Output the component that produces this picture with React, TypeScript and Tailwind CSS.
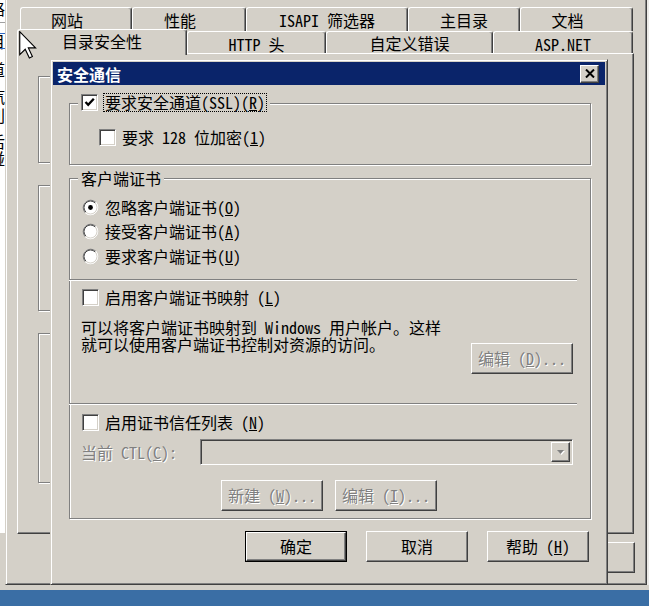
import React from "react";

const raised =
  "bg-[#d4d0c8] border border-t-white border-l-white border-r-[#404040] border-b-[#404040] shadow-[inset_-1px_-1px_0_#808080,inset_1px_1px_0_#d4d0c8]";
const sunken =
  "border border-t-[#808080] border-l-[#808080] border-r-white border-b-white shadow-[inset_1px_1px_0_#404040,inset_-1px_-1px_0_#d4d0c8]";
const etched = "border border-[#808080] shadow-[inset_1px_1px_0_#fff,1px_1px_0_#fff]";
const dis = "text-[#808080] [text-shadow:1px_1px_0_#fff]";

function Check({ checked }: { checked?: boolean }) {
  return (
    <div className={`w-[17px] h-[17px] bg-white shrink-0 flex items-center justify-center ${sunken}`}>
      {checked && (
        <svg width="11" height="11" viewBox="0 0 11 11">
          <path d="M1.5 5 L4.2 7.8 L9.8 1.8" stroke="#000" strokeWidth="2.3" fill="none" />
        </svg>
      )}
    </div>
  );
}

function Radio({ checked }: { checked?: boolean }) {
  return (
    <svg width="17" height="17" viewBox="0 0 17 17" className="shrink-0">
      <circle cx="8.5" cy="8.5" r="7.5" fill="#fff" />
      <path d="M3.2 13.8 A7.5 7.5 0 0 1 13.8 3.2" stroke="#808080" fill="none" />
      <path d="M13.8 3.2 A7.5 7.5 0 0 1 3.2 13.8" stroke="#ffffff" fill="none" />
      <path d="M3.9 13.1 A6.5 6.5 0 0 1 13.1 3.9" stroke="#404040" fill="none" />
      <path d="M13.1 3.9 A6.5 6.5 0 0 1 3.9 13.1" stroke="#d4d0c8" fill="none" />
      {checked && <circle cx="8.5" cy="8.5" r="2.4" fill="#000" />}
    </svg>
  );
}

function Btn({
  children,
  def,
  disabled,
  w = "w-[102px]",
}: {
  children: React.ReactNode;
  def?: boolean;
  disabled?: boolean;
  w?: string;
}) {
  const inner = (
    <div
      className={`h-full w-full flex items-center justify-center whitespace-nowrap ${raised} ${disabled ? dis : "text-black"}`}
    >
      {children}
    </div>
  );
  if (def) {
    return <div className={`${w} h-[31px] border border-black shrink-0`}>{inner}</div>;
  }
  return <div className={`${w} h-[31px] shrink-0`}>{inner}</div>;
}

const tabBase =
  "flex items-center justify-center bg-[#d4d0c8] border-t border-l border-r border-t-white border-l-white border-r-[#404040] shadow-[inset_-1px_0_0_#808080] rounded-t-[3px] text-[16px] leading-[16px] whitespace-nowrap";

export default function App() {
  return (
    <div className="relative w-[649px] h-[606px] overflow-hidden bg-[#d4d0c8] text-black text-[16px] leading-[17px] [font-family:'Noto_Sans_Mono_CJK_SC','Noto_Sans_CJK_SC',monospace] flex flex-col">
      <div className="flex h-[590px]">
        {/* far-left window behind */}
        <div className="w-[5px] h-[590px] flex flex-col overflow-hidden">
          <div className="h-[533px] bg-white overflow-hidden flex flex-col text-[16px] leading-[16px]">
            <div className="-ml-[11px] h-[16px]">路</div>
            <div className="mt-[6px] h-[1px] bg-[#a0a0a0]" />
            <div className="mt-[10px] h-[1px] bg-[#316ac5]" />
            <div className="-ml-[11px] h-[14px] leading-[14px]">目</div>
            <div className="h-[1px] bg-[#316ac5]" />
            <div className="mt-[12px] -ml-[11px] h-[16px]">道</div>
            <div className="mt-[11px] -ml-[11px] h-[16px]">汽</div>
            <div className="mt-[3px] -ml-[11px] h-[16px]">則</div>
            <div className="mt-[10px] -ml-[11px] h-[16px]">后</div>
            <div className="mt-[1px] -ml-[11px] h-[16px]">碰</div>
            <div className="mt-[18px] -ml-[11px] h-[16px]">·</div>
          </div>
        </div>

        {/* parent properties window */}
        <div className="w-[642px] h-[585px] flex flex-col border-l border-l-[#d4d0c8] border-r border-r-[#404040] border-b border-b-[#404040] shadow-[inset_1px_0_0_#fff,inset_-1px_-1px_0_#808080] pl-[11px] pt-[7px]">
          <div className="w-[617px] flex flex-col">
            {/* back row tabs */}
            <div className="flex h-[24px] pl-[3px]">
              <div className={`${tabBase} w-[112px] pr-[18px] pt-[1px]`}>网站</div>
              <div className={`${tabBase} w-[114px] pr-[18px] pt-[1px]`}>性能</div>
              <div className={`${tabBase} w-[162px] pt-[1px]`}>ISAPI 筛选器</div>
              <div className={`${tabBase} w-[112px] pt-[1px]`}>主目录</div>
              <div className={`${tabBase} w-[113px] pr-[18px] pt-[1px]`}>文档</div>
            </div>
            {/* front row tabs */}
            <div className="flex h-[22px] relative z-10">
              <div className={`${tabBase} w-[170px] h-[26px] -mt-[2px] pb-[4px]`}>目录安全性</div>
              <div className={`${tabBase} w-[139px] h-[22px] pt-[2px]`}>HTTP 头</div>
              <div className={`${tabBase} w-[167px] h-[22px] pt-[1px]`}>自定义错误</div>
              <div className={`${tabBase} w-[140px] h-[22px] pt-[2px]`}>ASP.NET</div>
            </div>
            {/* tab page */}
            <div className="h-[481px] border border-t-white border-l-white border-r-[#404040] border-b-[#404040] shadow-[inset_-1px_-1px_0_#808080] pl-[20px] pt-[22px] flex flex-col">
              <div className={`w-[560px] h-[87px] ${etched}`} />
              <div className={`mt-[22px] w-[560px] h-[126px] ${etched}`} />
              <div className={`mt-[22px] w-[560px] h-[150px] ${etched}`} />
            </div>
          </div>
          <div className="w-[618px] mt-[8px] flex justify-end gap-[8px]">
            <Btn w="w-[95px]">确定</Btn>
            <Btn w="w-[95px]">取消</Btn>
            <Btn w="w-[95px]">应用(A)</Btn>
            <Btn w="w-[95px]">帮助</Btn>
          </div>
        </div>

        <div className="w-[2px] h-[585px] bg-[#ecebe8]" />
      </div>

      {/* desktop */}
      <div className="h-[16px] bg-[#3a6ea5]" />

      {/* mouse cursor */}
      <svg
        className="absolute left-[19px] top-[31px] z-20"
        width="18"
        height="28"
        viewBox="0 0 12.5 19.5"
      >
        <path
          d="M0.5 0.5 L0.5 16.5 L4.3 12.7 L7.2 18.8 L9.3 17.8 L6.5 11.8 L11.5 11.8 Z"
          fill="#fff"
          stroke="#000"
          strokeWidth="0.8"
          strokeLinejoin="miter"
        />
      </svg>

      {/* 安全通信 dialog */}
      <div className="absolute z-30 left-[50px] top-[59px] w-[558px] h-[526px] bg-[#d4d0c8] border border-t-[#d4d0c8] border-l-[#d4d0c8] border-r-[#404040] border-b-[#404040] shadow-[inset_1px_1px_0_#fff,inset_-1px_-1px_0_#808080] p-[2px] flex flex-col">
        <div className="h-[23px] bg-[#0a246a] flex items-center justify-between pl-[4px] pr-[6px]">
          <span className="text-white font-bold text-[16px] leading-[16px]">安全通信</span>
          <div className={`w-[19px] h-[18px] flex items-center justify-center ${raised}`}>
            <svg width="10" height="9" viewBox="0 0 10 9">
              <path d="M1 0.5 L9 8.5 M9 0.5 L1 8.5" stroke="#000" strokeWidth="2" />
            </svg>
          </div>
        </div>

        <div className="flex flex-col px-[16px]">
          {/* group 1 */}
          <div className={`relative mt-[18px] w-[522px] h-[62px] ${etched}`}>
            <div className="absolute left-[8px] -top-[12px] h-[20px] flex items-center gap-[5px] px-[3px] bg-[#d4d0c8]">
              <Check checked />
              <span className="h-[19px] border border-dotted border-black px-[1px] leading-[17px] whitespace-nowrap">
                要求安全通道(SSL)(<u>R</u>)
              </span>
            </div>
            <div className="mt-[25px] pl-[29px] flex items-center gap-[6px] h-[17px]">
              <Check />
              <span className="whitespace-nowrap">
                要求 128 位加密(<u>1</u>)
              </span>
            </div>
          </div>

          {/* group 2 */}
          <div className={`relative mt-[13px] w-[522px] h-[341px] flex flex-col ${etched}`}>
            <div className="absolute left-[8px] -top-[10px] px-[3px] bg-[#d4d0c8] leading-[18px] whitespace-nowrap">
              客户端证书
            </div>
            <div className="pt-[16px] pl-[12px] flex flex-col">
              <div className="h-[24px] flex items-center gap-[6px]">
                <Radio checked />
                <span>
                  忽略客户端证书(<u>O</u>)
                </span>
              </div>
              <div className="h-[25px] flex items-center gap-[6px]">
                <Radio />
                <span>
                  接受客户端证书(<u>A</u>)
                </span>
              </div>
              <div className="h-[24px] flex items-center gap-[6px]">
                <Radio />
                <span>
                  要求客户端证书(<u>U</u>)
                </span>
              </div>
            </div>
            <div className="mt-[11px] -ml-[1px] w-[508px] h-[2px] border-t border-t-[#808080] border-b border-b-white" />
            <div className="mt-[6px] h-[20px] pl-[12px] flex items-center gap-[6px]">
              <Check />
              <span>
                启用客户端证书映射 (<u>L</u>)
              </span>
            </div>
            <div className="mt-[12px] flex items-start">
              <div className="pl-[11px] whitespace-nowrap flex flex-col">
                <div className="h-[17px] leading-[17px]">可以将客户端证书映射到 Windows 用户帐户。这样</div>
                <div className="h-[17px] leading-[17px]">就可以使用客户端证书控制对资源的访问。</div>
              </div>
              <div className="ml-auto mr-[17px] mt-[24px]">
                <Btn disabled>
                  编辑 (<u>D</u>)...
                </Btn>
              </div>
            </div>
            <div className="mt-[29px] -ml-[1px] w-[508px] h-[2px] border-t border-t-[#808080] border-b border-b-white" />
            <div className="mt-[7px] h-[20px] pl-[12px] flex items-center gap-[6px]">
              <Check />
              <span>
                启用证书信任列表 (<u>N</u>)
              </span>
            </div>
            <div className="mt-[7px] h-[26px] flex items-center">
              <div className={`w-[130px] pl-[11px] whitespace-nowrap ${dis}`}>
                当前 CTL(<u>C</u>):
              </div>
              <div className={`w-[373px] h-[26px] p-[2px] flex justify-end ${sunken}`}>
                <div className={`w-[19px] h-full flex items-center justify-center ${raised}`}>
                  <svg width="9" height="6" viewBox="0 0 9 6">
                    <path d="M1 1 L8 1 L4.5 5 Z" fill="#fff" transform="translate(1 1)" />
                    <path d="M1 1 L8 1 L4.5 5 Z" fill="#808080" />
                  </svg>
                </div>
              </div>
            </div>
            <div className="mt-[15px] pl-[151px] flex gap-[12px]">
              <Btn disabled>
                新建 (<u>W</u>)...
              </Btn>
              <Btn disabled>
                编辑 (<u>I</u>)...
              </Btn>
            </div>
          </div>

          {/* dialog buttons */}
          <div className="mt-[12px] w-[522px] pr-[2px] flex justify-end gap-[19px]">
            <Btn def>确定</Btn>
            <Btn>取消</Btn>
            <Btn>
              帮助 (<u>H</u>)
            </Btn>
          </div>
        </div>
      </div>
    </div>
  );
}
